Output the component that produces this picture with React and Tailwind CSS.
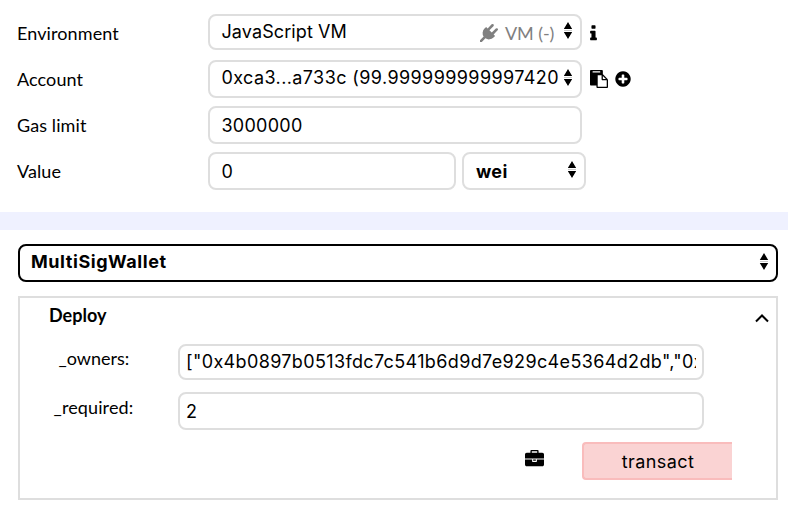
import React from "react";

const ICONS = {
  plug: "M1755 453q37 38 37 90.5t-37 90.5l-401 400 150 150-160 160q-163 163-389.5 186.5t-411.5-100.5l-362 362h-181v-181l362-362q-124-185-100.5-411.5t186.5-389.5l160-160 150 150 400-401q38-37 91-37t90 37 37 90.5-37 90.5l-400 401 234 234 401-400q38-37 91-37t90 37z",
  info: "M1216 1344v128q0 26-19 45t-45 19h-512q-26 0-45-19t-19-45v-128q0-26 19-45t45-19h64v-384h-64q-26 0-45-19t-19-45v-128q0-26 19-45t45-19h384q26 0 45 19t19 45v576h64q26 0 45 19t19 45zm-128-1152v192q0 26-19 45t-45 19h-256q-26 0-45-19t-19-45v-192q0-26 19-45t45-19h256q26 0 45 19t19 45z",
  paste: "M768 1664h896v-640h-416q-40 0-68-28t-28-68v-416h-384v1152zm256-1440v-64q0-13-9.5-22.5t-22.5-9.5h-704q-13 0-22.5 9.5t-9.5 22.5v64q0 13 9.5 22.5t22.5 9.5h704q13 0 22.5-9.5t9.5-22.5zm256 672h299l-299-299v299zm512 128v672q0 40-28 68t-68 28h-960q-40 0-68-28t-28-68v-160h-544q-40 0-68-28t-28-68v-1344q0-40 28-68t68-28h1088q40 0 68 28t28 68v328q21 13 36 28l408 408q28 28 48 76t20 88z",
  plus: "M1344 960v-128q0-26-19-45t-45-19h-256v-256q0-26-19-45t-45-19h-128q-26 0-45 19t-19 45v256h-256q-26 0-45 19t-19 45v128q0 26 19 45t45 19h256v256q0 26 19 45t45 19h128q26 0 45-19t19-45v-256h256q26 0 45-19t19-45zm320-64q0 209-103 385.5t-279.5 279.5-385.5 103-385.5-103-279.5-279.5-103-385.5 103-385.5 279.5-279.5 385.5-103 385.5 103 279.5 279.5 103 385.5z",
  briefcase: "M640 256h512v-128h-512v128zm1152 640v480q0 66-47 113t-113 47h-1472q-66 0-113-47t-47-113v-480h672v160q0 26 19 45t45 19h320q26 0 45-19t19-45v-160h672zm-768 0v128h-256v-128h256zm768-480v384h-1792v-384q0-66 47-113t113-47h352v-160q0-40 28-68t68-28h576q40 0 68 28t28 68v160h352q66 0 113 47t47 113z",
};

function Icon({ name, className }) {
  return (
    <svg viewBox="0 0 1792 1792" fill="currentColor" className={`shrink-0 ${className}`}>
      <path d={ICONS[name]} />
    </svg>
  );
}

function Arrows({ className = "" }) {
  return (
    <svg viewBox="0 0 10 17" className={`h-[17px] w-[10px] shrink-0 ${className}`}>
      <path d="M5 0L9.2 7H.8zM5 17L.8 10h8.4z" fill="#000" />
      <path d="M1 8.5h8" stroke="#ccc" />
    </svg>
  );
}

function Label({ children }) {
  return (
    <div className="w-[191px] shrink-0 pt-px font-[Lato,sans-serif] text-[18px] leading-[36px] tracking-[0.1px]">
      {children}
    </div>
  );
}

const box = "flex shrink-0 overflow-hidden whitespace-nowrap rounded-[8px] border-2 border-[#dedede] bg-white";

export default function App() {
  return (
    <div className="h-[530px] w-[788px] overflow-hidden bg-white font-[Inter,sans-serif] text-[18px] leading-[34px] text-black">
      <div className="flex h-[212px] flex-col pl-[17px] pt-[14px]">
        <div className="flex h-[46px]">
          <Label>Environment</Label>
          <div className={`${box} h-[36px] w-[374px] pl-[11.5px]`}>
            <span className="w-[258px] leading-[31px] tracking-[0.1px]">JavaScript VM</span>
            <Icon name="plug" className="mt-[8px] size-[18px] text-[#808080]" />
            <span className="ml-[7.5px] w-[58px] font-[Lato,sans-serif] leading-[35px] tracking-[-0.1px] text-[#808080]">VM (-)</span>
            <Arrows className="mt-[6px]" />
          </div>
          <Icon name="info" className="ml-[2px] mt-[10px] size-[19px]" />
        </div>
        <div className="flex h-[46px]">
          <Label>Account</Label>
          <div className={`${box} h-[38px] w-[374px] pl-[11.5px]`}>
            <span className="w-[341.5px] overflow-hidden leading-[31px] tracking-[0.4px]">0xca3...a733c (99.999999999997420</span>
            <Arrows className="mt-[7px]" />
          </div>
          <Icon name="paste" className="ml-[8px] mt-[10px] size-[18px]" />
          <Icon name="plus" className="ml-[6px] mt-[10px] size-[18px]" />
        </div>
        <div className="flex h-[46px]">
          <Label>Gas limit</Label>
          <div className={`${box} h-[38px] w-[374px] pl-[11.5px]`}>
            <span className="leading-[35px] tracking-[0.25px]">3000000</span>
          </div>
        </div>
        <div className="flex h-[46px]">
          <Label>Value</Label>
          <div className={`${box} h-[38px] w-[248px] pl-[11.5px]`}>
            <span className="leading-[35px]">0</span>
          </div>
          <div className={`${box} ml-[6px] h-[38px] w-[124px] pl-[12px]`}>
            <span className="w-[91px] font-bold leading-[35px] tracking-[0.3px]">wei</span>
            <Arrows className="mt-[7px]" />
          </div>
        </div>
      </div>

      <div className="h-[18px] bg-[#eff1ff]" />

      <div className="pl-[18px] pr-[10px] pt-[14px]">
        <div className="flex h-[38px] justify-between rounded-[8px] border-2 border-black pl-[11px] pr-[7px]">
          <span className="font-bold leading-[31px] tracking-[0.56px]">MultiSigWallet</span>
          <Arrows className="mt-[7px]" />
        </div>

        <div className="mt-[14px] flex h-[204px] flex-col border-2 border-[#dedede]">
          <div className="flex h-[46px] justify-between pl-[29px] pr-[6px]">
            <span className="font-[Lato,sans-serif] font-bold leading-[34px]">Deploy</span>
            <svg viewBox="0 0 16 10" className="mt-[15px] h-[10px] w-[16px]" fill="none" stroke="#000" strokeWidth="2">
              <path d="M2 8.5L8 2.5l6 6" />
            </svg>
          </div>
          <div className="flex h-[48px]">
            <div className="w-[158px] pl-[38.5px] font-[Lato,sans-serif] leading-[29px]">_owners:</div>
            <div className={`${box} h-[36px] w-[526px] px-[6px]`}>
              <span className="w-[510px] overflow-hidden leading-[32px] tracking-[0.36px]">["0x4b0897b0513fdc7c541b6d9d7e929c4e5364d2db","0x</span>
            </div>
          </div>
          <div className="flex h-[50px]">
            <div className="w-[158px] pl-[33.5px] font-[Lato,sans-serif] leading-[31px] tracking-[0.12px]">_required:</div>
            <div className={`${box} h-[38px] w-[526px] px-[6px]`}>
              <span className="leading-[35px]">2</span>
            </div>
          </div>
          <div className="flex">
            <Icon name="briefcase" className="ml-[505px] mt-[8px] size-[19px]" />
            <div className="ml-[38px] h-[38px] w-[150px] rounded-l-[4px] border-2 border-r-0 border-[#f9bcbc] bg-[#fad3d3] text-center leading-[36px] tracking-[0.4px]">transact</div>
          </div>
        </div>
      </div>
    </div>
  );
}
